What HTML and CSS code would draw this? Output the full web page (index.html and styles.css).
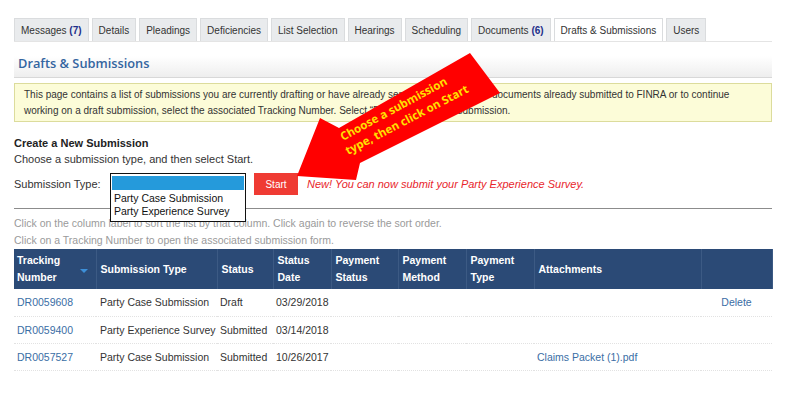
FILE: index.html
```html
<!DOCTYPE html>
<html lang="en">
<head>
  <meta charset="UTF-8" />
  <title>Drafts &amp; Submissions</title>
  <link rel="stylesheet" href="styles.css">
</head>
<body>
  <div class="tabs">
    <div class="tab">Messages <b class="count">(7)</b></div>
    <div class="tab">Details</div>
    <div class="tab">Pleadings</div>
    <div class="tab">Deficiencies</div>
    <div class="tab">List Selection</div>
    <div class="tab">Hearings</div>
    <div class="tab">Scheduling</div>
    <div class="tab">Documents <b class="count">(6)</b></div>
    <div class="tab active">Drafts &amp; Submissions</div>
    <div class="tab">Users</div>
  </div>

  <div class="page-head">
    <h1>Drafts &amp; Submissions</h1>
  </div>

  <div class="info">
    This page contains a list of submissions you are currently drafting or have already sent to FINRA. Files or documents already submitted to FINRA or to continue<br>
    working on a draft submission, select the associated Tracking Number. Select “Delete” to delete a submission.
  </div>

  <h2>Create a New Submission</h2>
  <p class="lead">Choose a submission type, and then select Start.</p>

  <div class="new-row">
    <span class="label">Submission Type:</span>
    <div class="select-wrap">
      <div class="listbox">
        <div class="option selected">&nbsp;</div>
        <div class="option">Party Case Submission</div>
        <div class="option">Party Experience Survey</div>
      </div>
    </div>
    <button class="start">Start</button>
    <span class="notice">New! You can now submit your Party Experience Survey.</span>
  </div>

  <hr>

  <div class="hints">
    <p>Click on the column label to sort the list by that column. Click again to reverse the sort order.</p>
    <p>Click on a Tracking Number to open the associated submission form.</p>
  </div>

  <table class="subs">
    <colgroup>
      <col style="width:82px"><col style="width:121px"><col style="width:56px"><col style="width:58px">
      <col style="width:67px"><col style="width:68px"><col style="width:68px"><col style="width:167px"><col style="width:71px">
    </colgroup>
    <thead>
      <tr>
        <th class="sorted">Tracking<br>Number
          <svg class="caret" width="8" height="5" viewBox="0 0 8 5"><path d="M0 0h8L4 4z" fill="#3d8fd8"/></svg>
        </th>
        <th>Submission Type</th>
        <th>Status</th>
        <th>Status<br>Date</th>
        <th>Payment<br>Status</th>
        <th>Payment<br>Method</th>
        <th>Payment<br>Type</th>
        <th class="split">Attachments</th>
        <th class="split"></th>
      </tr>
    </thead>
    <tbody>
      <tr>
        <td><a href="#">DR0059608</a></td>
        <td>Party Case Submission</td>
        <td>Draft</td>
        <td>03/29/2018</td>
        <td></td><td></td><td></td><td></td>
        <td class="action"><a href="#">Delete</a></td>
      </tr>
      <tr>
        <td><a href="#">DR0059400</a></td>
        <td>Party Experience Survey</td>
        <td>Submitted</td>
        <td>03/14/2018</td>
        <td></td><td></td><td></td><td></td><td></td>
      </tr>
      <tr>
        <td><a href="#">DR0057527</a></td>
        <td>Party Case Submission</td>
        <td>Submitted</td>
        <td>10/26/2017</td>
        <td></td><td></td><td></td>
        <td><a href="#">Claims Packet (1).pdf</a></td>
        <td></td>
      </tr>
    </tbody>
  </table>

  <!-- callout drawn over the page -->
  <svg class="callout" width="787" height="394" viewBox="0 0 787 394">
    <polygon points="297,176 320,118 339,128 470,53 500,93 360,163 356,180" fill="#ff0000"/>
    <text class="callout-text" transform="translate(343,141) rotate(-28.5)">Choose a submission</text>
    <text class="callout-text" transform="translate(348,155) rotate(-27.5)">type, then click on Start</text>
  </svg>
</body>
</html>
```

FILE: styles.css
```css
* {
  box-sizing: border-box;
}

body {
  margin: 0;
  padding: 18px 15px 0 14px;
  font-family: 'Liberation Sans', Arial, sans-serif;
  font-size: 11px;
  color: #333;
  background: #fff;
  position: relative;
}

a {
  color: #3a6ea5;
  text-decoration: none;
}

.tabs {
  display: flex;
  gap: 3px;
  height: 24px;
  border-bottom: 1px solid #e4e4e4;
}

.tab {
  flex-shrink: 0;
  white-space: nowrap;
  padding: 0 6px;
  line-height: 23px;
  font-size: 10px;
  background: #e9ebed;
  border: 1px solid #dadcde;
  border-bottom: none;
  color: #333;
}

.tab.active {
  background: #fff;
}

.tab .count {
  color: #1d2f8a;
}

.page-head {
  height: 36px;
  padding: 0 4px;
  display: flex;
  align-items: center;
  background: linear-gradient(to bottom, #fff 40%, #eee);
  border-bottom: 1px solid #d8d8d8;
}

h1 {
  margin: 7px 0 0;
  font-family: 'Open Sans', sans-serif;
  font-size: 12.8px;
  font-weight: 600;
  color: #3465a0;
}

.info {
  margin-top: 5px;
  padding: 3px 9px;
  background: #fcfcd8;
  border: 1px solid #dcdc9c;
  font-size: 10px;
  line-height: 15.5px;
  white-space: nowrap;
}

h2 {
  margin: 13px 0 0;
  font-size: 11px;
  line-height: 16px;
  font-weight: bold;
  color: #222;
}

.lead {
  margin: 0;
  line-height: 16px;
}

.new-row {
  margin-top: 6px;
  display: flex;
  align-items: center;
  height: 22px;
}

.label {
  width: 96px;
}

.select-wrap {
  position: relative;
  width: 136px;
  height: 22px;
}

.listbox {
  position: absolute;
  top: 0;
  left: 0;
  width: 136px;
  background: #fff;
  border: 1px solid #111;
  padding: 2px 1px 3px;
  z-index: 2;
}

.option {
  font-size: 10.5px;
  line-height: 13px;
  padding: 0 2px;
  color: #111;
}

.option.selected {
  background: #259adb;
  height: 14px;
  margin-bottom: 2px;
}

.start {
  margin-left: 8px;
  width: 44px;
  height: 22px;
  border: none;
  background: #ef3b33;
  color: #fff;
  font-family: 'Liberation Sans', Arial, sans-serif;
  font-size: 10px;
  padding: 0;
}

.notice {
  margin-left: 9px;
  color: #e8262c;
  font-style: italic;
  font-size: 11px;
}

hr {
  margin: 13px 0 0;
  border: none;
  border-top: 1px solid #8c8c8c;
}

.hints {
  margin-top: 6px;
}

.hints p {
  margin: 0;
  color: #9a9a9a;
  font-size: 10.5px;
  line-height: 17px;
}

.subs {
  margin-top: 0;
  width: 758px;
  border-collapse: collapse;
  table-layout: fixed;
}

.subs th {
  background: #2b4a76;
  color: #fff;
  font-size: 10.5px;
  font-weight: bold;
  text-align: left;
  line-height: 17px;
  height: 40px;
  padding: 2px 4px;
  border-right: 1px solid #3c5a84;
  vertical-align: middle;
  position: relative;
}

.subs th.split {
  border-left: 1px solid #c9d1dc;
}

.subs th.sorted {
  padding-left: 3px;
}

.caret {
  position: absolute;
  right: 8px;
  top: 20px;
}

.subs td {
  height: 27px;
  padding: 0 3px;
  border-bottom: 1px dotted #e2e2e2;
  white-space: nowrap;
  font-size: 10.5px;
}

.subs td:nth-child(2) {
  padding-left: 4px;
}

.subs td.action {
  text-align: center;
}

.callout {
  position: absolute;
  top: 0;
  left: 0;
  pointer-events: none;
  z-index: 3;
}

.callout-text {
  font-family: 'Open Sans', sans-serif;
  font-weight: bold;
  font-size: 11.5px;
  fill: #ffe000;
}
```
